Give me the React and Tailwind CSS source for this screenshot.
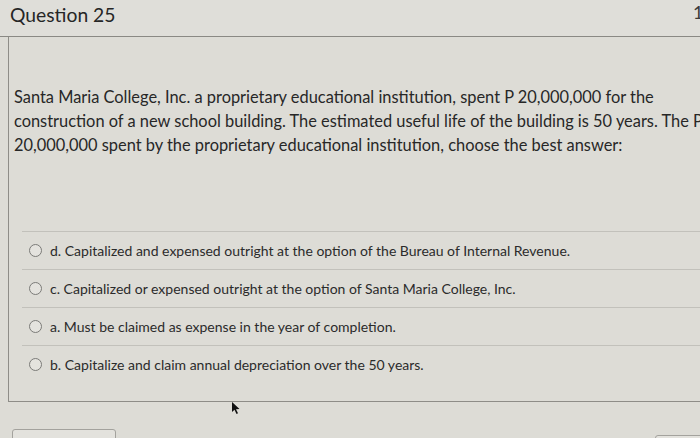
import React from "react";

const answers = [
  "d. Capitalized and expensed outright at the option of the Bureau of Internal Revenue.",
  "c. Capitalized or expensed outright at the option of Santa Maria College, Inc.",
  "a. Must be claimed as expense in the year of completion.",
  "b. Capitalize and claim annual depreciation over the 50 years.",
];

export default function App() {
  return (
    <div
      className="relative w-[700px] h-[438px] overflow-hidden bg-[#dddcd6] text-[#2a2a2a]"
      style={{ fontFamily: "Lato, 'Open Sans', sans-serif" }}
    >
      <div className="h-[37px] border-b border-[#8a8984] bg-[#dfded9] pl-[10px] pt-[2px]">
        <div className="text-[19.3px] leading-[26px] text-[#262626]">Question 25</div>
      </div>
      <span className="absolute left-[693px] top-[2px] text-[18px] leading-[20px] text-[#3a3a3a]">1</span>

      <div className="ml-[8px] h-[365px] border-l border-b border-[#8e8d88]">
        <div className="pl-[5px] pt-[48px] text-[16.4px] leading-[24px] whitespace-nowrap text-[#272727]">
          <div>Santa Maria College, Inc. a proprietary educational institution, spent P 20,000,000 for the</div>
          <div>construction of a new school building. The estimated useful life of the building is 50 years. The P</div>
          <div>20,000,000 spent by the proprietary educational institution, choose the best answer:</div>
        </div>

        <div className="ml-[13px] mt-[74px]">
          {answers.map((a) => (
            <div
              key={a}
              className="flex h-[38px] items-center border-t border-[#c2c1bb] pl-[7px] text-[14px] text-[#2b2b2b] whitespace-nowrap"
            >
              <span className="mr-[8px] inline-block h-[13px] w-[13px] rounded-full border border-[#7b7b78] bg-[#e4e3de]" />
              <span>{a}</span>
            </div>
          ))}
        </div>
      </div>

      <div className="absolute left-[12px] top-[429px] h-[20px] w-[104px] rounded-[3px] border border-[#a3a29d] bg-[#e3e2dd]" />
      <div className="absolute left-[655px] top-[435px] h-[20px] w-[60px] rounded-[3px] border border-[#a3a29d] bg-[#e3e2dd]" />

      <svg className="absolute left-[231px] top-[401px]" width="10" height="14" viewBox="0 0 10 14">
        <path d="M1 1 L1 11 L3.5 8.8 L5.5 13 L7 12.3 L5 8.2 L8.5 8 Z" fill="#111" />
      </svg>
    </div>
  );
}
